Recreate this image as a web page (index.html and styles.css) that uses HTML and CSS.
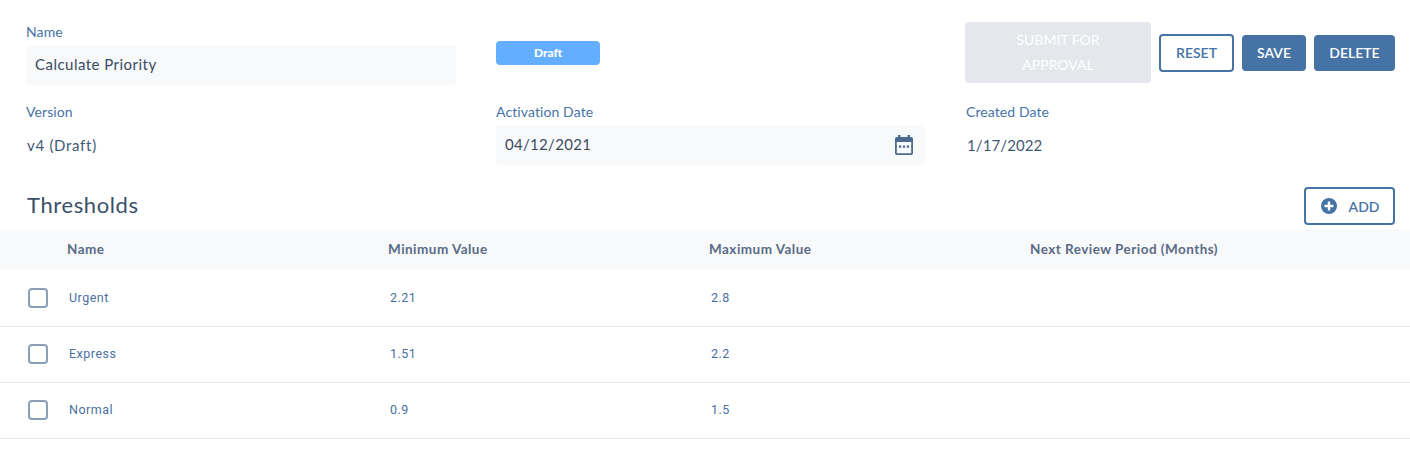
FILE: index.html
```html
<!DOCTYPE html>
<html lang="en">
<head>
<meta charset="utf-8">
<title>Calculate Priority</title>
<link rel="stylesheet" href="styles.css">
</head>
<body>
<main class="page">
  <section class="form">
    <div class="field">
      <label class="label">Name</label>
      <div class="input input-name">Calculate Priority</div>
    </div>
    <div class="status"><span class="badge">Draft</span></div>
    <div class="actions">
      <button class="btn btn-disabled">SUBMIT FOR APPROVAL</button>
      <button class="btn btn-outline btn-reset">RESET</button>
      <button class="btn btn-solid btn-save">SAVE</button>
      <button class="btn btn-solid btn-delete">DELETE</button>
    </div>
    <div class="field">
      <label class="label">Version</label>
      <div class="value value-version">v4 (Draft)</div>
    </div>
    <div class="field">
      <label class="label">Activation Date</label>
      <div class="input input-date">04/12/2021
        <svg class="cal" viewBox="0 0 20 22" width="20" height="22" aria-hidden="true">
          <path fill="#4a6a8f" fill-rule="evenodd" d="M4 1h2.4v2h7.2V1H16v2h1.2A1.8 1.8 0 0 1 19 4.800V19.200A1.800 1.800 0 0 1 17.200 21H2.800A1.800 1.800 0 0 1 1 19.200V4.800A1.800 1.800 0 0 1 2.800 3H4zM2.800 8v11.200h14.400V8z"/>
          <rect x="5" y="11.500" width="2.200" height="2.200" fill="#4a6a8f"/>
          <rect x="8.900" y="11.500" width="2.200" height="2.200" fill="#4a6a8f"/>
          <rect x="12.800" y="11.500" width="2.200" height="2.200" fill="#4a6a8f"/>
        </svg>
      </div>
    </div>
    <div class="field">
      <label class="label">Created Date</label>
      <div class="value value-created">1/17/2022</div>
    </div>
  </section>

  <section class="section-head">
    <h2 class="title">Thresholds</h2>
    <button class="btn btn-outline btn-add">
      <svg viewBox="0 0 16 16" width="16" height="16" aria-hidden="true">
        <path fill="#4673a5" fill-rule="evenodd" d="M8 0a8 8 0 1 1 0 16A8 8 0 0 1 8 0zM6.800 3.500v3.300H3.500v2.400h3.300v3.300h2.400V9.200h3.300V6.800H9.200V3.500z"/>
      </svg>
      ADD
    </button>
  </section>

  <div class="table">
    <div class="row head">
      <div class="c-check"></div>
      <div class="cell">Name</div>
      <div class="cell">Minimum Value</div>
      <div class="cell">Maximum Value</div>
      <div class="cell">Next Review Period (Months)</div>
    </div>
    <div class="row">
      <div class="c-check"><span class="checkbox"></span></div>
      <div class="cell">Urgent</div>
      <div class="cell">2.21</div>
      <div class="cell">2.8</div>
      <div class="cell"></div>
    </div>
    <div class="row">
      <div class="c-check"><span class="checkbox"></span></div>
      <div class="cell">Express</div>
      <div class="cell">1.51</div>
      <div class="cell">2.2</div>
      <div class="cell"></div>
    </div>
    <div class="row">
      <div class="c-check"><span class="checkbox"></span></div>
      <div class="cell">Normal</div>
      <div class="cell">0.9</div>
      <div class="cell">1.5</div>
      <div class="cell"></div>
    </div>
  </div>
</main>
</body>
</html>
```
FILE: styles.css
```css
* { box-sizing: border-box; }
html, body { margin: 0; background: #fff; }
body { font-family: Lato, "Open Sans", sans-serif; color: #3a4a60; overflow: hidden; }
.page { width: 1410px; height: 453px; padding-top: 22px; }

.form {
  display: grid;
  grid-template-columns: 470px 470px 1fr;
  grid-template-rows: 80px 63px;
  padding: 0 15px 0 26px;
}
.field { display: flex; flex-direction: column; width: 430px; }
.label { flex: none; font-size: 14px; letter-spacing: .1px; line-height: 20px; height: 23px; color: #4673a5; }
.input {
  flex: none; height: 40px; background: #f8f9fb; border-radius: 4px;
  padding: 0 11px 2px 9px; font-size: 15px; line-height: 20px; color: #3a4a60;
  display: flex; justify-content: space-between; align-items: center;
}
.input-name { letter-spacing: .47px; }
.input-date { width: 429px; letter-spacing: .3px; }
.cal { margin-top: 2px; }
.value { flex: none; height: 40px; line-height: 40px; font-size: 15px; padding-left: 1px; color: #3f5875; }
.value-version { letter-spacing: .7px; }
.value-created { letter-spacing: .1px; }
.status { padding-top: 19px; }
.badge {
  display: block; width: 104px; height: 24px; line-height: 24px;
  background: #64aeff; border-radius: 4px; color: #fff;
  font-size: 12px; font-weight: 900; text-align: center;
}
.actions { display: flex; align-items: center; gap: 8px; align-self: start; margin-left: -1px; }
.btn {
  font-family: inherit; font-size: 14px; font-weight: 600; border-radius: 4px;
  border: 0; padding: 0; margin: 0; text-align: center;
}
.btn-disabled {
  flex: none; width: 186px; height: 61px; background: #e4e7ec; color: #fff;
  line-height: 25px; padding: 0 30px 2px; font-weight: 400;
}
.btn-outline { background: #fff; border: 2px solid #4673a5; color: #4673a5; }
.btn-reset { width: 75px; height: 38px; }
.btn-solid { background: #4673a5; color: #fff; height: 36px; }
.btn-save { width: 64px; }
.btn-delete { width: 81px; }

.section-head {
  display: flex; justify-content: space-between; align-items: center;
  height: 38px; margin-top: 22px; padding: 0 15px 0 27px;
}
.title { margin: 0 0 4px; font-size: 22px; font-weight: 400; letter-spacing: .6px; color: #3a4f68; }
.btn-add {
  width: 91px; height: 38px; padding-left: 1px; display: flex; align-items: center; justify-content: center; gap: 12px;
}

.table { margin-top: 5px; }
.row { display: flex; align-items: center; height: 56px; padding-bottom: 1px; border-bottom: 1px solid #e4e7ec; }
.row.head { height: 40px; margin-bottom: 1px; padding-bottom: 1px; background: #f8f9fb; border-bottom: 0; }
.c-check { width: 69px; padding-left: 28px; flex: none; display: flex; }
.cell { width: 321px; flex: none; padding-bottom: 1px; font-family: Roboto, sans-serif; font-size: 12.5px; letter-spacing: .5px; color: #4a6f9f; }
.head .c-check { width: 67px; }
.head .cell { font-family: Lato, sans-serif; font-size: 13.5px; letter-spacing: .47px; font-weight: 700; color: #5a6b85; }
.checkbox { display: block; width: 20px; height: 20px; border: 2px solid #8aa0b9; border-radius: 4px; }
```
